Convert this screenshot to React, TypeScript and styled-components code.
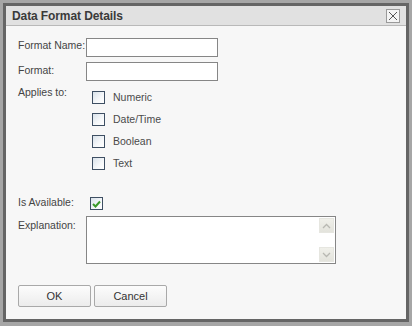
import React from 'react';
import styled, { createGlobalStyle } from 'styled-components';

const GlobalStyle = createGlobalStyle`
  html, body {
    margin: 0;
    padding: 0;
    background: #a6a6a6;
    font-family: "Liberation Sans", Arial, sans-serif;
  }
`;

const Page = styled.div`
  width: 412px;
  height: 326px;
  padding: 3px;
  box-sizing: border-box;
  background: #a6a6a6;
`;

const Dialog = styled.div`
  width: 406px;
  height: 319px;
  box-sizing: border-box;
  border: 3px solid #656565;
  background: #f7f7f7;
  display: flex;
  flex-direction: column;
`;

const TitleBar = styled.div`
  height: 20px;
  box-sizing: border-box;
  border-bottom: 1px solid #b9b9b9;
  background: #e1e1e1;
  display: flex;
  align-items: center;
  justify-content: space-between;
  padding: 0 6px 0 6px;
`;

const Title = styled.div`
  font-size: 12px;
  font-weight: bold;
  color: #3a3a3a;
  letter-spacing: -0.1px;
`;

const CloseButton = styled.button`
  width: 14px;
  height: 14px;
  padding: 0;
  margin-top: 1px;
  border: 1px solid #9a9a9a;
  background: #f4f4f4;
  display: flex;
  align-items: center;
  justify-content: center;
`;

const Body = styled.div`
  padding: 12px 0 0 12px;
  display: flex;
  flex-direction: column;
`;

const FieldRow = styled.div<{ $gap: number }>`
  display: flex;
  align-items: flex-start;
  margin-top: ${p => p.$gap}px;
`;

const Label = styled.div<{ $offset?: number }>`
  width: 68px;
  flex: none;
  font-size: 10.5px;
  line-height: 13px;
  color: #444;
  padding-top: ${p => p.$offset ?? 0}px;
`;

const TextInput = styled.input`
  width: 132px;
  height: 19px;
  box-sizing: border-box;
  border: 1px solid #868686;
  background: #fff;
  padding: 0 3px;
  font-size: 11px;
  outline: none;
`;

const CheckList = styled.div`
  display: flex;
  flex-direction: column;
  gap: 9px;
  padding: 6px 0 0 6px;
`;

const CheckItem = styled.label`
  display: flex;
  align-items: center;
  gap: 8px;
  height: 13px;
  font-size: 10.5px;
  line-height: 15px;
  color: #4a4a4a;
`;

const Box = styled.span<{ $pad?: number }>`
  width: 13px;
  height: 13px;
  box-sizing: border-box;
  flex: none;
  border: 1px solid #3e4f63;
  background: linear-gradient(135deg, #d9e2ea 0%, #f6f8fa 60%, #ffffff 100%);
  display: flex;
  align-items: center;
  justify-content: center;
  margin-top: ${p => p.$pad ?? 0}px;
  margin-left: ${p => (p.$pad ? 4 : 0)}px;
`;

const AreaBox = styled.div`
  width: 250px;
  height: 48px;
  box-sizing: border-box;
  border: 1px solid #868686;
  background: #fff;
  display: flex;
`;

const Area = styled.textarea`
  flex: 1;
  border: none;
  resize: none;
  outline: none;
  padding: 2px;
  font-size: 11px;
  background: transparent;
`;

const ScrollBar = styled.div`
  width: 15px;
  display: flex;
  flex-direction: column;
  justify-content: space-between;
  padding: 1px 0;
  margin-right: 1px;
`;

const ScrollArrow = styled.div`
  height: 15px;
  background: linear-gradient(#f0f0ea, #e3e3dc);
  border: 1px solid #e6e6e0;
  box-sizing: border-box;
  display: flex;
  align-items: center;
  justify-content: center;
`;

const ButtonRow = styled.div`
  display: flex;
  gap: 3px;
  margin-top: 21px;
`;

const Button = styled.button`
  width: 73px;
  height: 22px;
  box-sizing: border-box;
  border: 1px solid #a9a9a9;
  border-radius: 2px;
  background: linear-gradient(#fcfcfc, #ececec);
  font-family: "Liberation Sans", Arial, sans-serif;
  font-size: 11px;
  color: #333;
  padding: 0;
`;

const Chevron = ({ up }: { up?: boolean }) => (
  <svg width="9" height="6" viewBox="0 0 9 6">
    <path
      d={up ? 'M1 5 L4.5 1.5 L8 5' : 'M1 1 L4.5 4.5 L8 1'}
      fill="none"
      stroke="#b8b8b2"
      strokeWidth="1.3"
    />
  </svg>
);

const types = ['Numeric', 'Date/Time', 'Boolean', 'Text'];

export default function App() {
  return (
    <>
      <GlobalStyle />
      <Page>
        <Dialog>
          <TitleBar>
            <Title>Data Format Details</Title>
            <CloseButton aria-label="Close">
              <svg width="10" height="10" viewBox="0 0 10 10">
                <path d="M1 1 L9 9 M9 1 L1 9" stroke="#555" strokeWidth="1" />
              </svg>
            </CloseButton>
          </TitleBar>
          <Body>
            <FieldRow $gap={0}>
              <Label $offset={1}>Format Name:</Label>
              <TextInput />
            </FieldRow>
            <FieldRow $gap={5}>
              <Label $offset={2}>Format:</Label>
              <TextInput />
            </FieldRow>
            <FieldRow $gap={4}>
              <Label $offset={1}>Applies to:</Label>
              <CheckList>
                {types.map(t => (
                  <CheckItem key={t}>
                    <Box />
                    {t}
                  </CheckItem>
                ))}
              </CheckList>
            </FieldRow>
            <FieldRow $gap={24}>
              <Label $offset={2}>Is Available:</Label>
              <Box $pad={3}>
                <svg width="9" height="8" viewBox="0 0 9 8">
                  <path d="M1 4 L3.5 6.5 L8 1.5" fill="none" stroke="#3a9a2a" strokeWidth="2" />
                </svg>
              </Box>
            </FieldRow>
            <FieldRow $gap={6}>
              <Label $offset={3}>Explanation:</Label>
              <AreaBox>
                <Area />
                <ScrollBar>
                  <ScrollArrow>
                    <Chevron up />
                  </ScrollArrow>
                  <ScrollArrow>
                    <Chevron />
                  </ScrollArrow>
                </ScrollBar>
              </AreaBox>
            </FieldRow>
            <ButtonRow>
              <Button>OK</Button>
              <Button>Cancel</Button>
            </ButtonRow>
          </Body>
        </Dialog>
      </Page>
    </>
  );
}
